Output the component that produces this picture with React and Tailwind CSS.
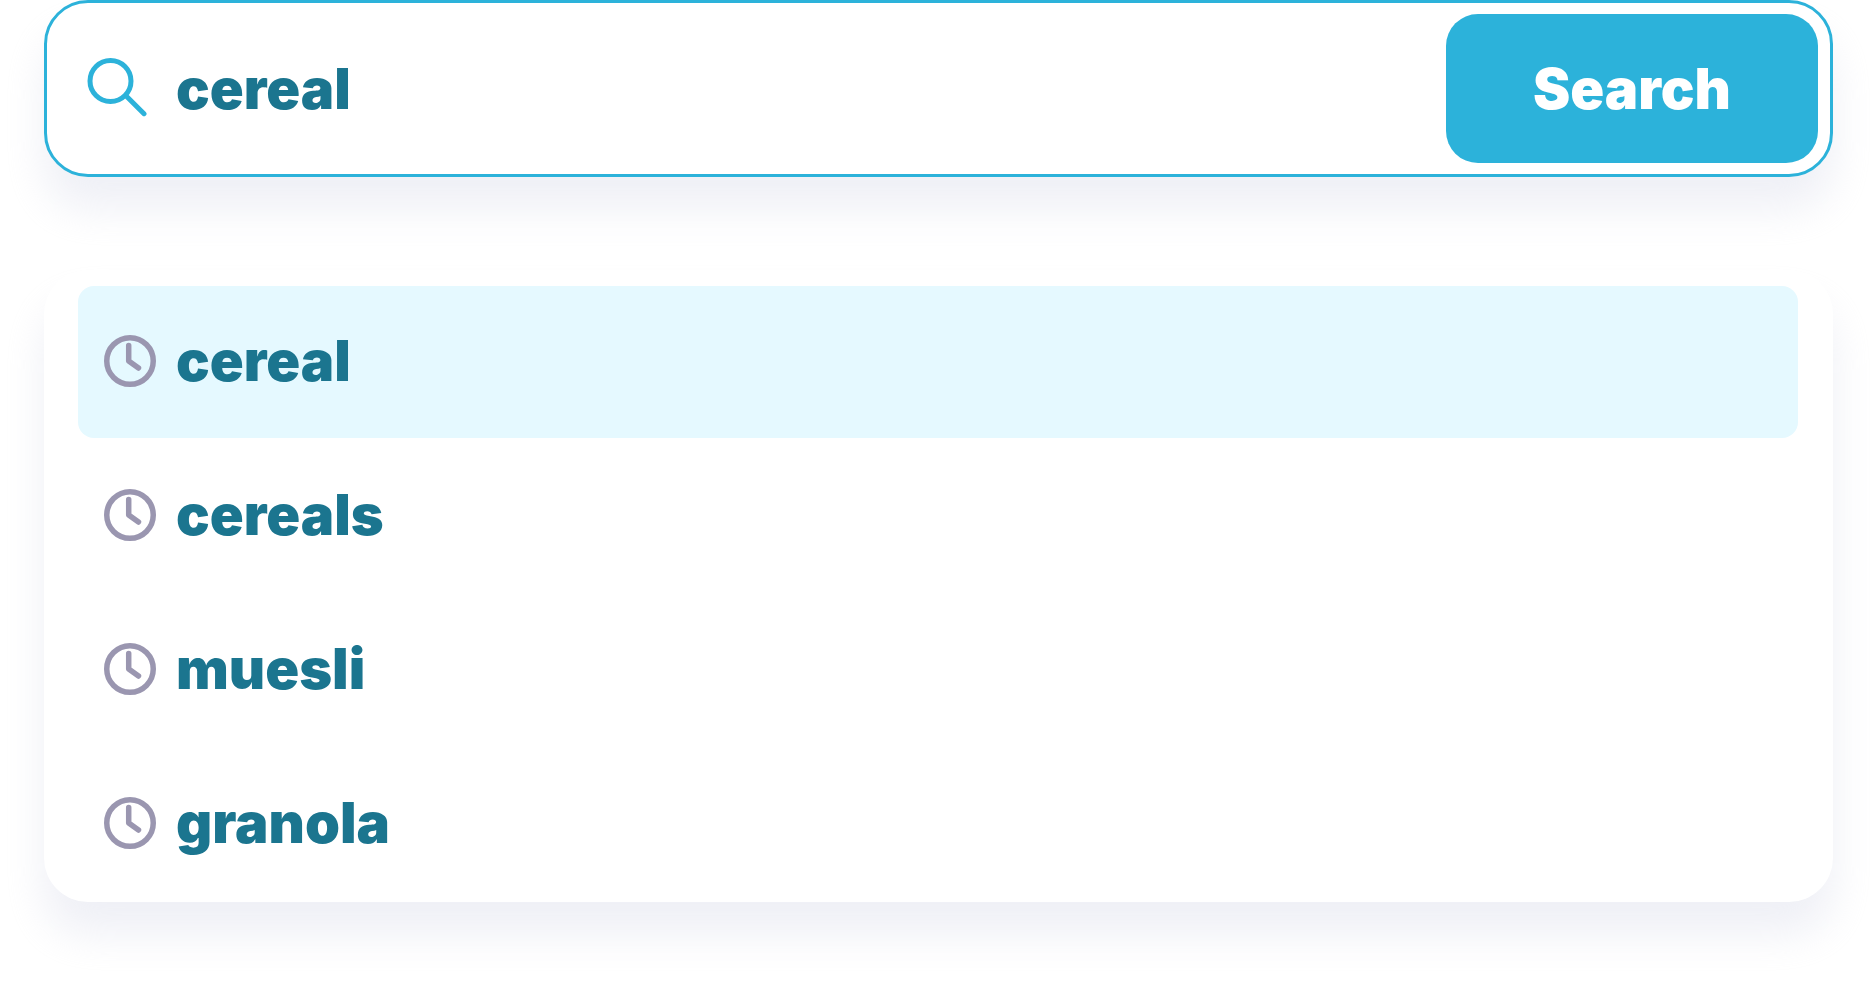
import React from 'react';

const suggestions = ['cereal', 'cereals', 'muesli', 'granola'];

const SearchIcon = () => (
  <svg className="w-[60px] h-[60px] shrink-0 -mt-[4px]" viewBox="0 0 60 60" fill="none" stroke="#2cb2da" strokeLinecap="round">
    <circle cx="23.5" cy="24" r="20.5" strokeWidth="5" />
    <path d="M39.7 39.5L57 56.7" strokeWidth="5" />
  </svg>
);

const ClockIcon = () => (
  <svg className="w-[52px] h-[52px] shrink-0 -mt-[2px]" viewBox="0 0 52 52" fill="none" stroke="#9a96b0" strokeLinecap="round">
    <circle cx="26" cy="26" r="23.25" strokeWidth="5.5" />
    <path d="M24.7 10.5V26L34.5 33" strokeWidth="5.5" strokeLinejoin="round" />
  </svg>
);

const App = () => {
  return (
    <div className="min-h-[982px] bg-white pl-[44px] pr-[37px] font-['Inter',sans-serif] font-black text-[56px] text-[#1b758f] overflow-hidden">
      {/* Search bar */}
      <div className="h-[177px] flex items-center pl-[40px] pr-[12px] bg-white border-[3px] border-[#2cb2da] rounded-[44px] shadow-[0_32px_40px_rgba(214,217,233,0.4)]">
        <SearchIcon />
        <span className="ml-[29px] flex-1">cereal</span>
        <button className="w-[372px] h-[149px] bg-[#2cb2da] text-white rounded-[32px]">Search</button>
      </div>

      {/* Suggestions */}
      <div className="mt-[93px] pt-[16px] pb-[2px] pl-[34px] pr-[35px] bg-white rounded-[44px] shadow-[0_32px_40px_rgba(214,217,233,0.4)]">
        {suggestions.map((item, i) => (
          <div
            key={item}
            className={`h-[152px] mb-[2px] last:mb-0 flex items-center gap-[20px] pl-[26px] rounded-[16px] ${i === 0 ? 'bg-[#e5f9ff]' : ''}`}
          >
            <ClockIcon />
            <span className="-mt-[3px]">{item}</span>
          </div>
        ))}
      </div>
    </div>
  );
};

export default App;
